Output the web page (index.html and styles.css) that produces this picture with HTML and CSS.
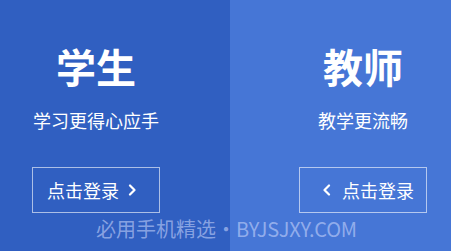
FILE: index.html
```html
<!DOCTYPE html>
<html lang="zh-CN">
<head>
<meta charset="utf-8">
<link rel="stylesheet" href="styles.css">
</head>
<body>
<div class="page">
  <section class="panel panel-student">
    <h1 class="title">学生</h1>
    <p class="desc">学习更得心应手</p>
    <a class="btn btn-next" href="#">
      <span class="btn-text">点击登录</span>
      <svg class="chev" width="9" height="12" viewBox="0 0 9 12"><path d="M2 1.5 L6.5 6 L2 10.5" fill="none" stroke="#fff" stroke-width="2.2" stroke-linecap="round" stroke-linejoin="round"/></svg>
    </a>
  </section>
  <section class="panel panel-teacher">
    <h1 class="title">教师</h1>
    <p class="desc">教学更流畅</p>
    <a class="btn btn-prev" href="#">
      <svg class="chev" width="9" height="12" viewBox="0 0 9 12"><path d="M7 1.5 L2.5 6 L7 10.5" fill="none" stroke="#fff" stroke-width="2.2" stroke-linecap="round" stroke-linejoin="round"/></svg>
      <span class="btn-text">点击登录</span>
    </a>
  </section>
  <div class="watermark">必用手机精选•<span class="wm-latin">BYJSJXY.COM</span></div>
</div>
</body>
</html>
```
FILE: styles.css
```css
* { box-sizing: border-box; }
html, body {
  margin: 0;
  padding: 0;
  width: 451px;
  height: 251px;
  overflow: hidden;
}
body {
  font-family: "Noto Sans CJK SC", "Noto Sans", sans-serif;
  color: #fff;
}
.page {
  position: relative;
  display: flex;
  width: 451px;
  height: 251px;
}
.panel {
  display: flex;
  flex-direction: column;
  align-items: center;
  padding-top: 42px;
}
.panel-student {
  width: 230px;
  padding-right: 38px;
  background: #305fc1;
}
.panel-teacher {
  width: 221px;
  padding-left: 45px;
  background: #4676d6;
}
.title {
  margin: 0;
  font-size: 40px;
  line-height: 48px;
  font-weight: 700;
  height: 48px;
}
.desc {
  margin: 18px 0 0;
  font-size: 18px;
  line-height: 24px;
}
.btn {
  margin-top: 35px;
  display: flex;
  align-items: center;
  width: 128px;
  height: 46px;
  border: 1px solid rgba(255,255,255,0.6);
  color: #fff;
  text-decoration: none;
  font-size: 18px;
  line-height: 24px;
}
.btn-next {
  padding-left: 14px;
  gap: 9px;
}
.btn-prev {
  padding-left: 22px;
  gap: 11px;
}
.chev { display: block; }
.watermark {
  position: absolute;
  left: 96px;
  top: 216px;
  font-size: 20px;
  line-height: 26px;
  color: rgba(210, 220, 255, 0.55);
  white-space: nowrap;
}
.wm-latin {
  letter-spacing: -0.2px;
}
```
